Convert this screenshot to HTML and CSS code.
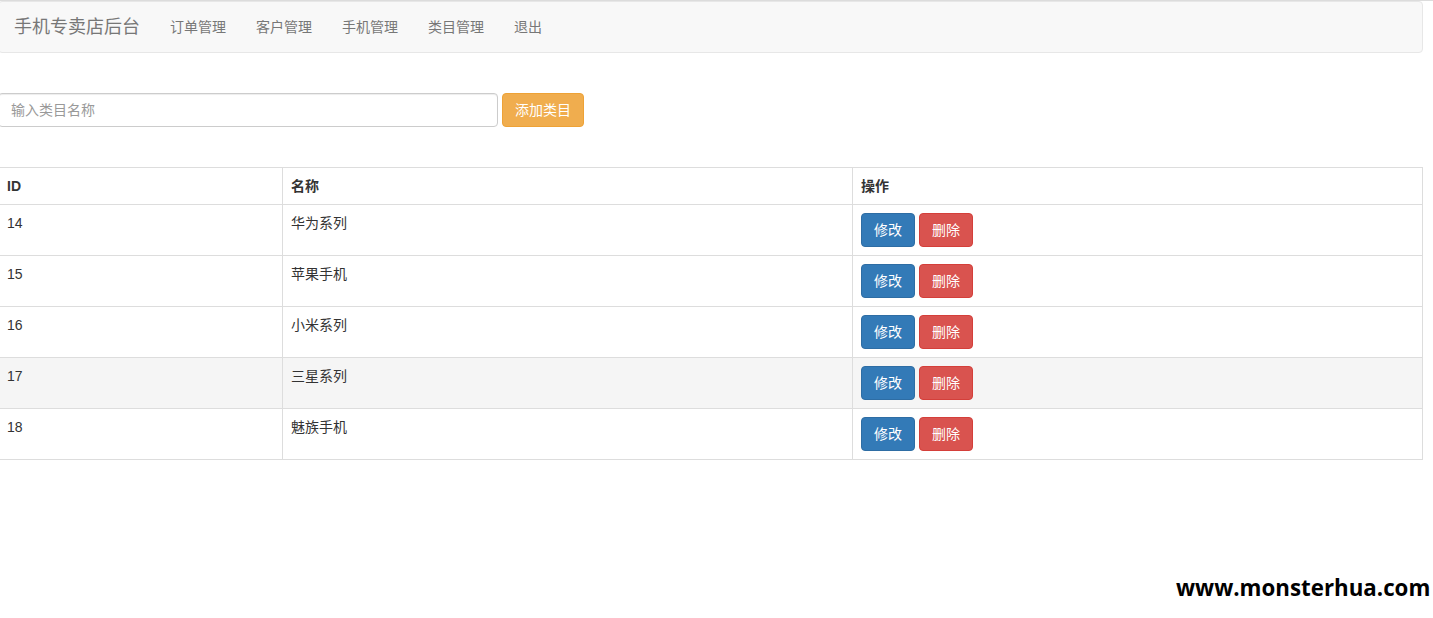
FILE: index.html
```html
<!DOCTYPE html>
<html lang="zh-CN">
<head>
<meta charset="utf-8">
<title>手机专卖店后台</title>
<link rel="stylesheet" href="styles.css">
</head>
<body>
<div class="topline"></div>
<div class="page">
  <nav class="navbar">
    <a class="brand" href="#">手机专卖店后台</a>
    <ul class="nav">
      <li><a href="#">订单管理</a></li>
      <li><a href="#">客户管理</a></li>
      <li><a href="#">手机管理</a></li>
      <li><a href="#">类目管理</a></li>
      <li><a href="#">退出</a></li>
    </ul>
  </nav>

  <form class="add-form">
    <input class="form-control" type="text" placeholder="输入类目名称">
    <button class="btn btn-warning" type="button">添加类目</button>
  </form>

  <table class="table">
    <thead>
      <tr><th class="c-id">ID</th><th class="c-name">名称</th><th>操作</th></tr>
    </thead>
    <tbody>
      <tr><td>14</td><td>华为系列</td><td><button class="btn btn-primary">修改</button> <button class="btn btn-danger">删除</button></td></tr>
      <tr><td>15</td><td>苹果手机</td><td><button class="btn btn-primary">修改</button> <button class="btn btn-danger">删除</button></td></tr>
      <tr><td>16</td><td>小米系列</td><td><button class="btn btn-primary">修改</button> <button class="btn btn-danger">删除</button></td></tr>
      <tr class="hover"><td>17</td><td>三星系列</td><td><button class="btn btn-primary">修改</button> <button class="btn btn-danger">删除</button></td></tr>
      <tr><td>18</td><td>魅族手机</td><td><button class="btn btn-primary">修改</button> <button class="btn btn-danger">删除</button></td></tr>
    </tbody>
  </table>
</div>
<div class="watermark">www.monsterhua.com</div>
</body>
</html>
```

FILE: styles.css
```css
* { box-sizing: border-box; }
html, body {
  margin: 0;
  padding: 0;
  background: #fff;
  font-family: "Liberation Sans", Arial, "Noto Sans CJK SC", sans-serif;
  font-size: 14px;
  line-height: 20px;
  color: #333;
}
.topline {
  height: 1px;
  background: #dcdcdc;
}
.page {
  width: 1425px;
  margin-left: -2px;
}
.navbar {
  display: flex;
  align-items: stretch;
  height: 52px;
  background: #f8f8f8;
  border: 1px solid #e7e7e7;
  border-radius: 4px;
}
.brand {
  display: block;
  padding: 15px 15px;
  height: 50px;
  font-size: 18px;
  line-height: 20px;
  color: #777;
  text-decoration: none;
}
.nav {
  display: flex;
  list-style: none;
  margin: 0;
  padding: 0;
}
.nav a {
  display: block;
  padding: 15px 15px;
  line-height: 20px;
  color: #777;
  text-decoration: none;
}
.add-form {
  display: flex;
  margin: 40px 0 40px 0;
}
.form-control {
  width: 500px;
  height: 34px;
  padding: 6px 12px;
  font: inherit;
  color: #555;
  background: #fff;
  border: 1px solid #ccc;
  border-radius: 4px;
  box-shadow: inset 0 1px 1px rgba(0,0,0,.075);
}
.form-control::placeholder { color: #999; }
.add-form .btn { margin-left: 4px; }
.btn {
  display: inline-block;
  height: 34px;
  padding: 6px 12px;
  font: inherit;
  line-height: 20px;
  border: 1px solid transparent;
  border-radius: 4px;
  color: #fff;
  cursor: pointer;
  vertical-align: middle;
}
.btn-warning { background: #f0ad4e; border-color: #eea236; }
.btn-primary { background: #337ab7; border-color: #2e6da4; }
.btn-danger { background: #d9534f; border-color: #d43f3a; }
.table {
  width: 1425px;
  border-collapse: collapse;
  border: 1px solid #ddd;
}
.table th, .table td {
  border: 1px solid #ddd;
  padding: 8px;
  text-align: left;
  vertical-align: top;
  line-height: 20px;
}
.table th { font-weight: bold; }
.c-id { width: 284px; }
.c-name { width: 570px; }
.table tr.hover td { background: #f5f5f5; }
.watermark {
  position: absolute;
  right: 0;
  top: 562px;
  width: 263px;
  height: 56px;
  padding: 11px 0 0 6px;
  background: #fff;
  font-family: "Open Sans", "DejaVu Sans", sans-serif;
  font-weight: bold;
  font-size: 22.3px;
  line-height: 30px;
  color: #000;
}
```
